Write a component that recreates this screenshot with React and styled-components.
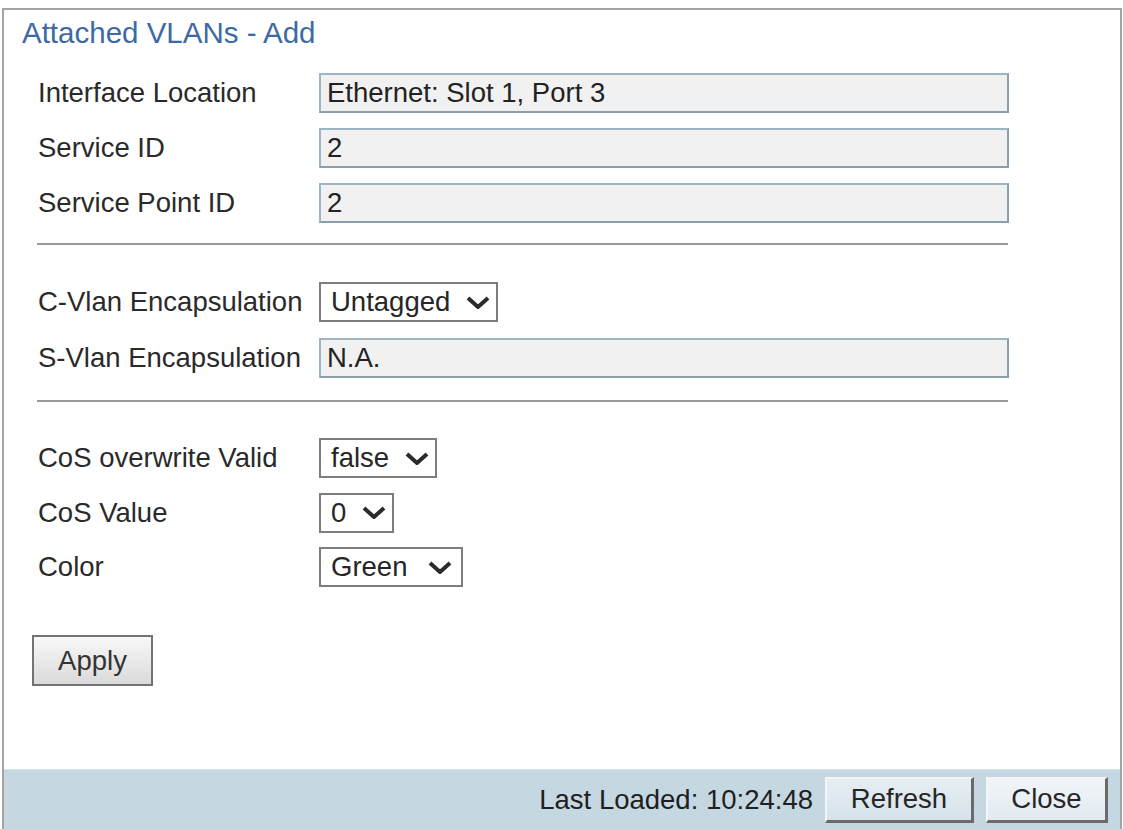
import React from 'react';
import styled, { createGlobalStyle } from 'styled-components';

const GlobalStyle = createGlobalStyle`
  html, body {
    margin: 0;
    padding: 0;
    background: #ffffff;
    overflow: hidden;
  }
  body {
    font-family: "Liberation Sans", Arial, sans-serif;
  }
`;

const Panel = styled.div`
  box-sizing: border-box;
  width: 1120px;
  height: 821px;
  margin: 8px 0 0 2px;
  border: 2px solid #a3a3a3;
  border-bottom: none;
  background: #ffffff;
  display: flex;
  flex-direction: column;
  overflow: hidden;
`;

const Title = styled.h1`
  margin: 6px 0 0 18px;
  font-size: 29.5px;
  line-height: 34px;
  font-weight: normal;
  color: #3d6aa4;
`;

const Form = styled.div`
  display: flex;
  flex-direction: column;
  padding-left: 34px;
`;

const Group = styled.div`
  display: flex;
  flex-direction: column;
  gap: ${p => p.$gap || 15}px;
  margin-top: ${p => p.$top}px;
`;

const Row = styled.div`
  display: grid;
  grid-template-columns: 281px auto;
  align-items: center;
  height: 40px;
`;

const Label = styled.span`
  font-size: 27.5px;
  color: #2a2a2a;
  white-space: nowrap;
`;

const ReadOnlyField = styled.input`
  box-sizing: border-box;
  width: 690px;
  height: 40px;
  padding: 0 6px;
  border: 2px solid #8b9eab;
  border-top-color: #9cb4c4;
  border-left-color: #9cb4c4;
  background: #f1f1f1;
  font-family: "Liberation Sans", Arial, sans-serif;
  font-size: 27.5px;
  color: #222222;
  outline: none;
`;

const Select = styled.div`
  box-sizing: border-box;
  display: inline-flex;
  align-items: center;
  justify-self: start;
  height: 40px;
  padding: 0 ${p => p.$right || 6}px 0 10px;
  gap: ${p => p.$gap || 16}px;
  border: 2px solid #7d7d7d;
  background: #ffffff;
  font-size: 27.5px;
  color: #262626;
`;

const Divider = styled.hr`
  box-sizing: border-box;
  width: 971px;
  margin: ${p => p.$top || 20}px 0 0 -1px;
  height: 2px;
  border: none;
  background: #999999;
`;

const ApplyRow = styled.div`
  padding-left: 28px;
  margin-top: 48px;
`;

const ApplyButton = styled.button`
  box-sizing: border-box;
  width: 121px;
  height: 51px;
  border: 2px solid #737373;
  background: linear-gradient(#f8f8f8, #dadada);
  font-family: "Liberation Sans", Arial, sans-serif;
  font-size: 27.5px;
  color: #333333;
  padding: 0;
`;

const Footer = styled.div`
  box-sizing: border-box;
  margin-top: auto;
  height: 60px;
  border-top: 1px solid #d6e4ec;
  background: #c5d8e2;
  display: flex;
  align-items: center;
  justify-content: flex-end;
  gap: 12px;
  padding-right: 12px;
`;

const Stamp = styled.span`
  font-size: 27.5px;
  color: #1f1f1f;
`;

const FooterButton = styled.button`
  box-sizing: border-box;
  width: ${p => p.$w}px;
  height: 46px;
  padding: 0;
  border-style: solid;
  border-width: 2px 3px 3px 2px;
  border-color: #f2f6f9 #6a6a6a #6a6a6a #f2f6f9;
  background: ${p => (p.$light ? 'linear-gradient(#f1f5f8, #e2eaf0)' : 'linear-gradient(#e6eef3, #d6e2ea)')};
  font-family: "Liberation Sans", Arial, sans-serif;
  font-size: 27.5px;
  color: #262626;
`;

const Chevron = () => (
  <svg width="24" height="13" viewBox="0 0 24 13">
    <polyline points="2,2 12,11 22,2" fill="none" stroke="#2b2b2b" strokeWidth="4" />
  </svg>
);

const Dropdown = ({ value, gap, right }) => (
  <Select $gap={gap} $right={right}>
    <span>{value}</span>
    <Chevron />
  </Select>
);

const fieldRows = [
  { label: 'Interface Location', value: 'Ethernet: Slot 1, Port 3' },
  { label: 'Service ID', value: '2' },
  { label: 'Service Point ID', value: '2' },
];

const cosRows = [
  { label: 'CoS overwrite Valid', value: 'false' },
  { label: 'CoS Value', value: '0' },
  { label: 'Color', value: 'Green', gap: 21, right: 9 },
];

export default function App() {
  return (
    <>
      <GlobalStyle />
      <Panel>
        <Title>Attached VLANs - Add</Title>
        <Form>
          <Group $top={23}>
            {fieldRows.map(r => (
              <Row key={r.label}>
                <Label>{r.label}</Label>
                <ReadOnlyField readOnly value={r.value} />
              </Row>
            ))}
          </Group>
          <Divider />
          <Group $top={37} $gap={16}>
            <Row>
              <Label>C-Vlan Encapsulation</Label>
              <Dropdown value="Untagged" />
            </Row>
            <Row>
              <Label>S-Vlan Encapsulation</Label>
              <ReadOnlyField readOnly value="N.A." />
            </Row>
          </Group>
          <Divider $top={22} />
          <Group $top={36} $gap={14.5}>
            {cosRows.map(r => (
              <Row key={r.label}>
                <Label>{r.label}</Label>
                <Dropdown value={r.value} gap={r.gap} right={r.right} />
              </Row>
            ))}
          </Group>
        </Form>
        <ApplyRow>
          <ApplyButton>Apply</ApplyButton>
        </ApplyRow>
        <Footer>
          <Stamp>Last Loaded: 10:24:48</Stamp>
          <FooterButton $w={149}>Refresh</FooterButton>
          <FooterButton $w={122} $light>Close</FooterButton>
        </Footer>
      </Panel>
    </>
  );
}
